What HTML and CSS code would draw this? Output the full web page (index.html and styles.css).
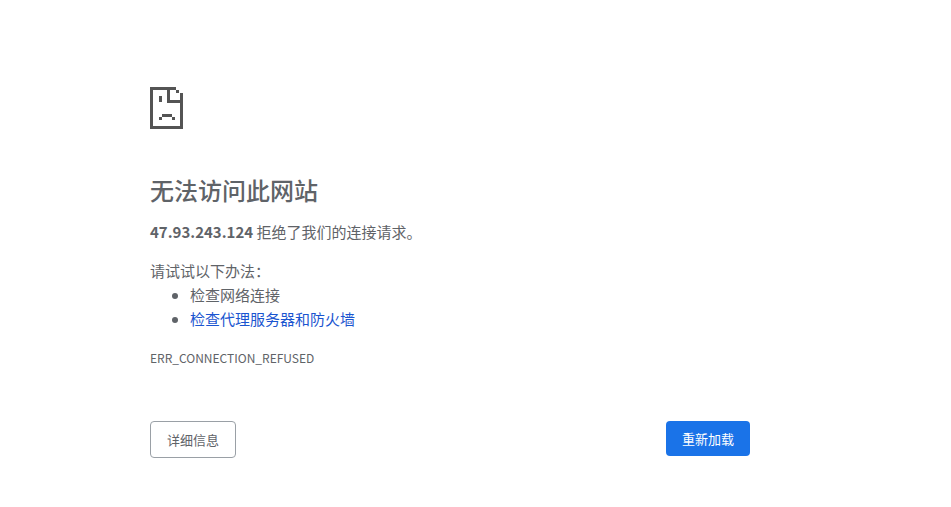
FILE: index.html
```html
<!DOCTYPE html>
<html lang="zh-CN">
<head>
<meta charset="utf-8">
<title>47.93.243.124</title>
<link rel="stylesheet" href="styles.css">
</head>
<body>
<main class="wrapper">
  <svg class="icon" width="33" height="42" viewBox="0 0 33 42" shape-rendering="crispEdges" aria-hidden="true">
    <path fill="#545454" d="M0 0H26V3H3V39H30V6H33V42H0Z"/>
    <path fill="#545454" d="M17 3H20V13H30V16H17Z"/>
    <path fill="#545454" d="M26 3H29V6H26Z"/>
    <path fill="#545454" d="M9 9H12V15H9Z"/>
    <path fill="#545454" d="M12 27H22V30H12ZM9 30H12V33H9ZM22 30H25V33H22Z"/>
  </svg>
  <h1 class="title">无法访问此网站</h1>
  <p class="summary"><strong>47.93.243.124</strong> 拒绝了我们的连接请求。</p>
  <div class="suggest">
    <p class="suggest-lead">请试试以下办法：</p>
    <ul class="suggest-list">
      <li>检查网络连接</li>
      <li><a class="link" href="#">检查代理服务器和防火墙</a></li>
    </ul>
  </div>
  <div class="code">ERR_CONNECTION_REFUSED</div>
  <div class="buttons">
    <button class="btn btn-details" type="button">详细信息</button>
    <button class="btn btn-reload" type="button">重新加载</button>
  </div>
</main>
</body>
</html>
```
FILE: styles.css
```css
html, body { margin: 0; padding: 0; background: #fff; }
body {
  font-family: "Noto Sans CJK SC", "Noto Sans", sans-serif;
  font-size: 15px;
  line-height: 24px;
  color: #5f6368;
}
.wrapper { width: 600px; margin-left: 150px; padding-top: 87px; }
.icon { display: block; }
.title { margin: 45px 0 0; font-size: 24px; font-weight: 500; line-height: 32px; color: #5f6368; }
.summary { margin: 14px 0 0; font-size: 15px; }
.suggest { margin-top: 15px; }
.suggest-lead { margin: 0; }
.suggest-list { margin: 0; padding: 0 0 0 40px; }
.suggest-list li { line-height: 24px; }
.link { color: #1a55d0; text-decoration: none; }
.code { margin-top: 15px; font-size: 12px; line-height: 24px; }
.buttons { display: flex; justify-content: space-between; align-items: flex-start; margin-top: 51px; }
.btn { font-family: inherit; font-size: 13px; font-weight: 400; line-height: 16px; border-radius: 4px; cursor: pointer; }
.btn-details { width: 86px; height: 37px; background: #fff; color: #5f6368; border: 1px solid #9aa0a6; }
.btn-reload { width: 84px; height: 35px; background: #1a73e8; color: #fff; border: 0; }
```
